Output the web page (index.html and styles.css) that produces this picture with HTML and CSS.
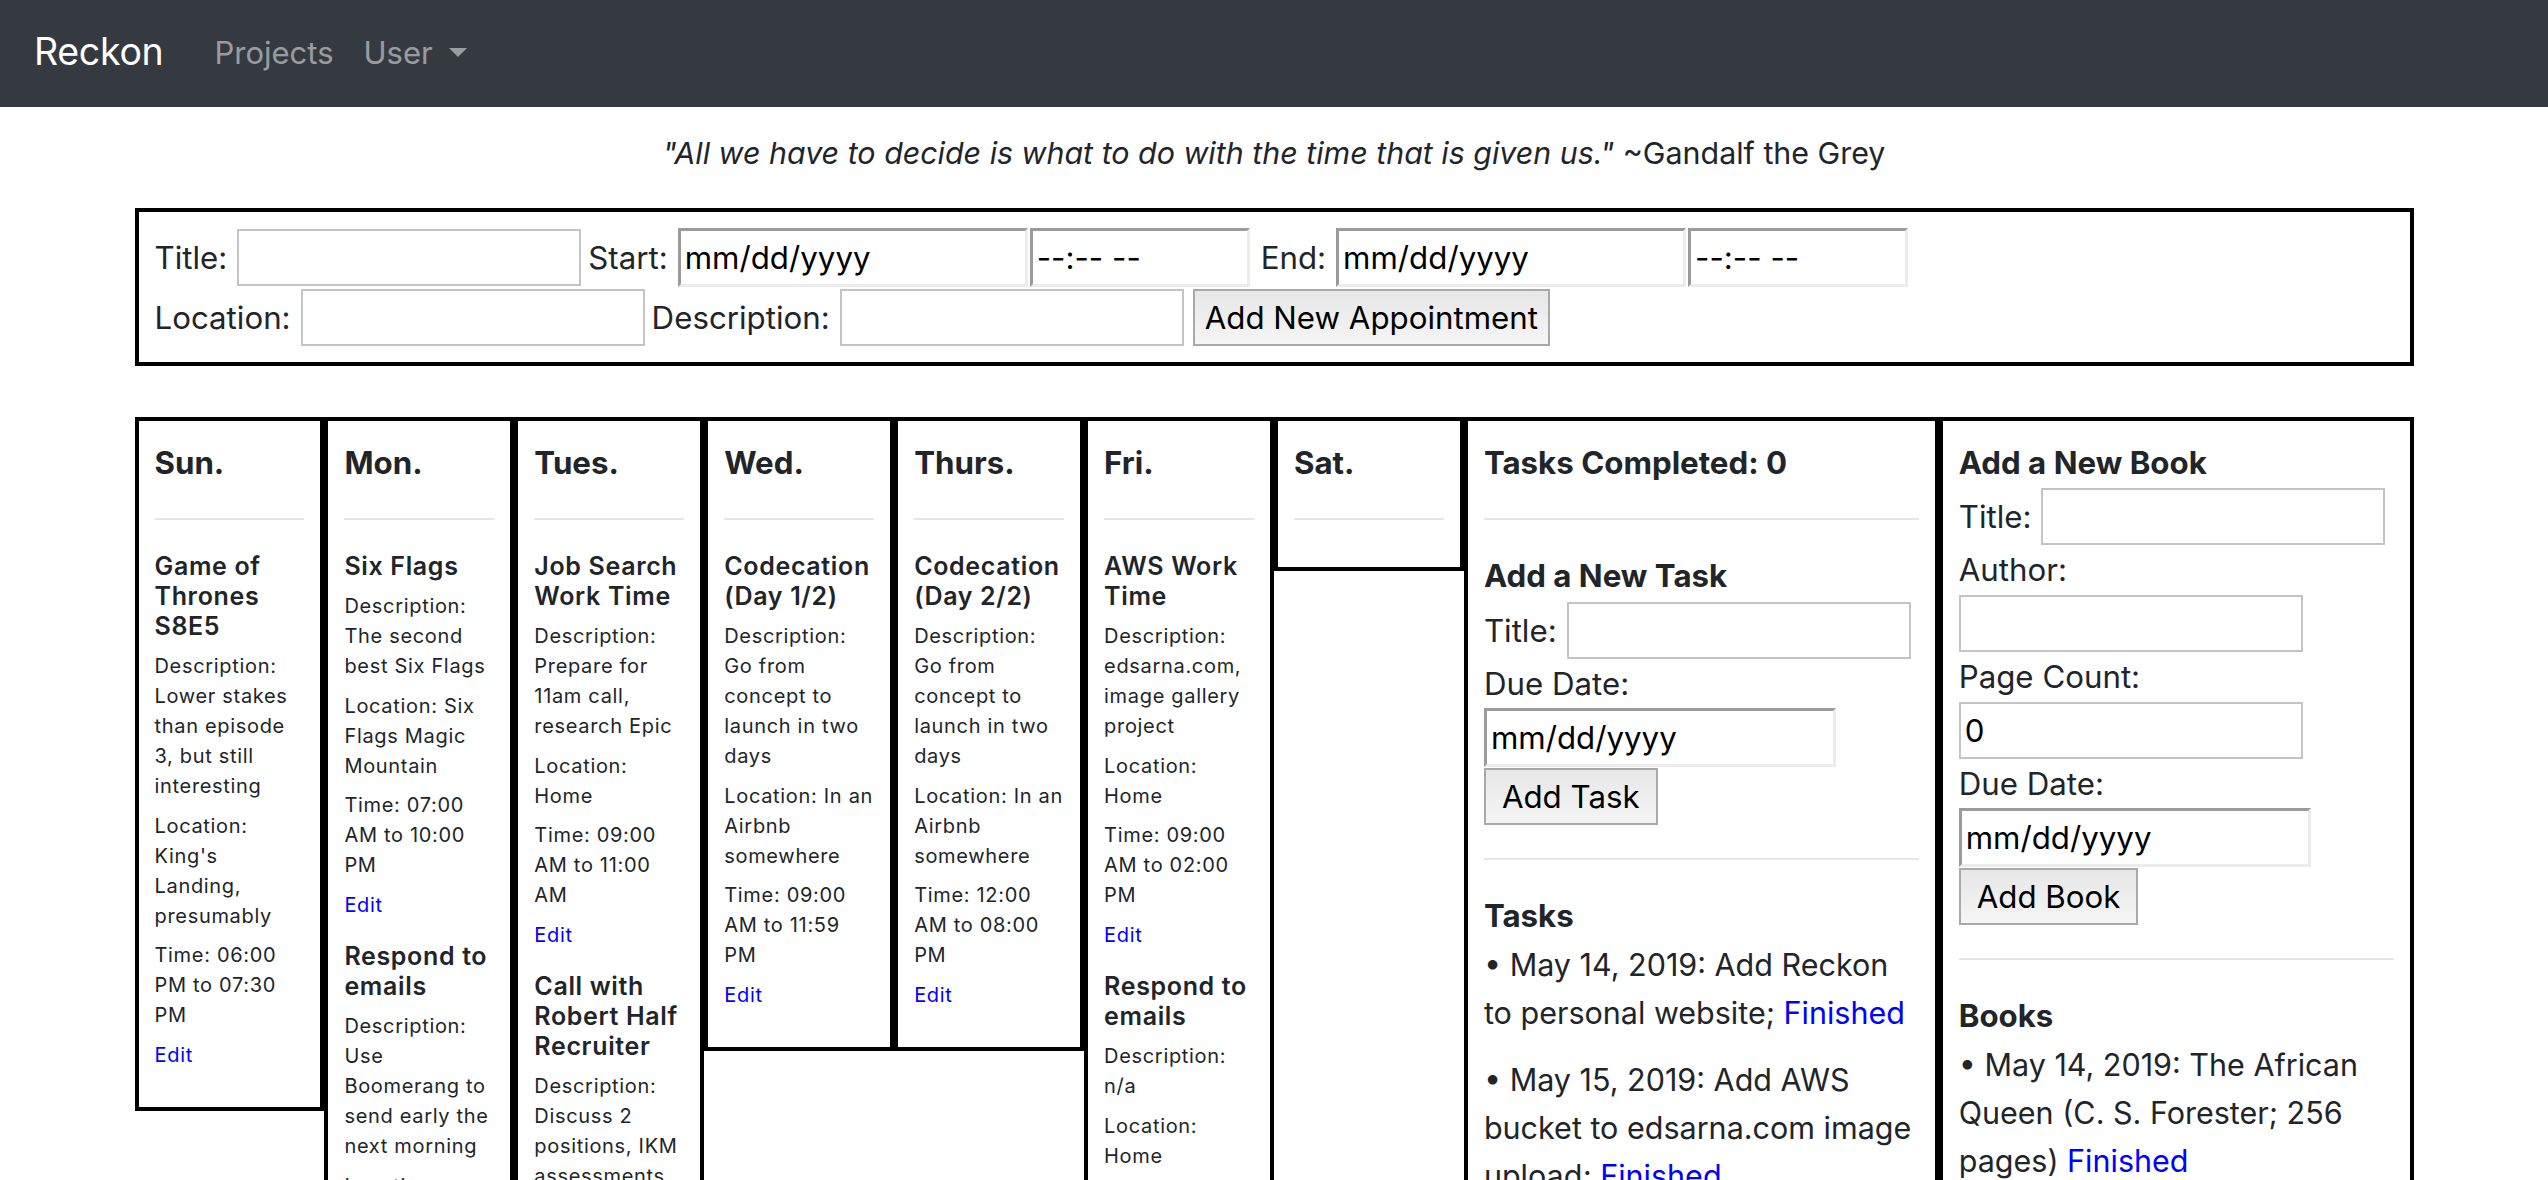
FILE: index.html
```html
<!DOCTYPE html>
<html lang="en">
<head>
<meta charset="utf-8">
<title>Reckon</title>
<link rel="stylesheet" href="styles.css">
</head>
<body>
<nav class="navbar">
  <a class="navbar-brand" href="#">Reckon</a>
  <a class="nav-link" href="#">Projects</a>
  <a class="nav-link dropdown-toggle" href="#">User</a>
</nav>

<p class="quote"><em>"All we have to decide is what to do with the time that is given us."</em> ~Gandalf the Grey</p>

<form class="appt-form">
  <div class="form-row">
    <label class="lbl">Title:</label>
    <input class="txt gap-after" type="text">
    <label class="lbl">Start:</label>
    <span class="dt-pair"><input class="date" type="text" placeholder="mm/dd/yyyy"><input class="date time" type="text" placeholder="--:-- --"></span>
    <label class="lbl">End:</label>
    <span class="dt-pair"><input class="date" type="text" placeholder="mm/dd/yyyy"><input class="date time" type="text" placeholder="--:-- --"></span>
  </div>
  <div class="form-row form-row-2">
    <label class="lbl">Location:</label>
    <input class="txt gap-after" type="text">
    <label class="lbl">Description:</label>
    <input class="txt gap-btn" type="text">
    <button class="btn" type="button">Add New Appointment</button>
  </div>
</form>

<main class="week">
  <section class="col">
    <h5 class="col-title">Sun.</h5>
    <hr>
    <div class="event">
      <h6 class="event-title">Game of Thrones S8E5</h6>
      <p>Description: Lower stakes than episode 3, but still interesting</p>
      <p>Location: King's Landing, presumably</p>
      <p>Time: 06:00 PM to 07:30 PM</p>
      <p><a href="#">Edit</a></p>
    </div>
  </section>

  <section class="col">
    <h5 class="col-title">Mon.</h5>
    <hr>
    <div class="event">
      <h6 class="event-title">Six Flags</h6>
      <p>Description: The second best Six Flags</p>
      <p>Location: Six Flags Magic Mountain</p>
      <p>Time: 07:00 AM to 10:00 PM</p>
      <p><a href="#">Edit</a></p>
    </div>
    <div class="event">
      <h6 class="event-title">Respond to emails</h6>
      <p>Description: Use Boomerang to send early the next morning</p>
      <p>Location: Home</p>
      <p>Time: 06:00 AM to 07:00 AM</p>
      <p><a href="#">Edit</a></p>
    </div>
  </section>

  <section class="col">
    <h5 class="col-title">Tues.</h5>
    <hr>
    <div class="event">
      <h6 class="event-title">Job Search Work Time</h6>
      <p>Description: Prepare for 11am call, research Epic</p>
      <p>Location: Home</p>
      <p>Time: 09:00 AM to 11:00 AM</p>
      <p><a href="#">Edit</a></p>
    </div>
    <div class="event">
      <h6 class="event-title">Call with Robert Half Recruiter</h6>
      <p>Description: Discuss 2 positions, IKM assessments</p>
      <p>Location: Phone</p>
      <p>Time: 11:00 AM to 11:30 AM</p>
      <p><a href="#">Edit</a></p>
    </div>
  </section>

  <section class="col">
    <h5 class="col-title">Wed.</h5>
    <hr>
    <div class="event">
      <h6 class="event-title">Codecation (Day 1/2)</h6>
      <p>Description: Go from concept to launch in two days</p>
      <p>Location: In an Airbnb somewhere</p>
      <p>Time: 09:00 AM to 11:59 PM</p>
      <p><a href="#">Edit</a></p>
    </div>
  </section>

  <section class="col">
    <h5 class="col-title">Thurs.</h5>
    <hr>
    <div class="event">
      <h6 class="event-title">Codecation (Day 2/2)</h6>
      <p>Description: Go from concept to launch in two days</p>
      <p>Location: In an Airbnb somewhere</p>
      <p>Time: 12:00 AM to 08:00 PM</p>
      <p><a href="#">Edit</a></p>
    </div>
  </section>

  <section class="col">
    <h5 class="col-title">Fri.</h5>
    <hr>
    <div class="event">
      <h6 class="event-title">AWS Work Time</h6>
      <p>Description: edsarna.com, image gallery project</p>
      <p>Location: Home</p>
      <p>Time: 09:00 AM to 02:00 PM</p>
      <p><a href="#">Edit</a></p>
    </div>
    <div class="event">
      <h6 class="event-title">Respond to emails</h6>
      <p>Description: n/a</p>
      <p>Location: Home</p>
      <p>Time: 05:00 PM to 05:30 PM</p>
      <p><a href="#">Edit</a></p>
    </div>
  </section>

  <section class="col">
    <h5 class="col-title">Sat.</h5>
    <hr>
  </section>

  <section class="col side">
    <h5 class="col-title">Tasks Completed: 0</h5>
    <hr>
    <h5 class="col-title sub">Add a New Task</h5>
    <div class="field-row">
      <label class="lbl">Title:</label>
      <input class="txt" type="text">
    </div>
    <label class="blk">Due Date:</label>
    <input class="date wide" type="text" placeholder="mm/dd/yyyy">
    <button class="btn side-btn" type="button">Add Task</button>
    <hr class="after-btn">
    <h5 class="col-title list-title">Tasks</h5>
    <p class="item">• May 14, 2019: Add Reckon to personal website; <a href="#">Finished</a></p>
    <p class="item">• May 15, 2019: Add AWS bucket to edsarna.com image upload; <a href="#">Finished</a></p>
  </section>

  <section class="col side">
    <h5 class="col-title book-head">Add a New Book</h5>
    <div class="field-row">
      <label class="lbl">Title:</label>
      <input class="txt" type="text">
    </div>
    <label class="blk">Author:</label>
    <input class="txt blk-input" type="text">
    <label class="blk">Page Count:</label>
    <input class="txt blk-input" type="text" value="0">
    <label class="blk">Due Date:</label>
    <input class="date wide" type="text" placeholder="mm/dd/yyyy">
    <button class="btn side-btn" type="button">Add Book</button>
    <hr class="after-btn">
    <h5 class="col-title list-title">Books</h5>
    <p class="item">• May 14, 2019: The African Queen (C. S. Forester; 256 pages) <a href="#">Finished</a></p>
  </section>
</main>
</body>
</html>
```

FILE: styles.css
```css
*, *::before, *::after { box-sizing: border-box; }

html { overflow: hidden; }

body {
  margin: 0;
  background: #fff;
  color: #212529;
  font-family: Inter, "Noto Sans", "Liberation Sans", sans-serif;
}

a { color: #0000ff; text-decoration: none; }

/* Navbar */
.navbar {
  display: flex;
  align-items: center;
  height: 107px;
  padding: 0 0 3px 34px;
  background: #343a40;
}
.navbar-brand {
  color: #fff;
  font-size: 37.5px;
  line-height: 1;
  letter-spacing: -0.3px;
  margin-right: 51px;
}
.nav-link {
  display: flex;
  align-items: center;
  color: rgba(255, 255, 255, 0.5);
  font-size: 31px;
  line-height: 1;
  margin-right: 30px;
}
.dropdown-toggle::after {
  content: "";
  margin-left: 16px;
  border-top: 9px solid rgba(255, 255, 255, 0.5);
  border-left: 9px solid transparent;
  border-right: 9px solid transparent;
}

/* Quote */
.quote {
  margin: 23px 0 31px;
  text-align: center;
  font-size: 30.4px;
  line-height: 47px;
}

/* Inputs */
input, button {
  margin: 0;
  font-family: inherit;
  color: #000;
  outline: none;
}
.txt {
  width: 344px;
  height: 57px;
  padding: 0 4px;
  border: 2px solid #c4c4c4;
  background: #fff;
  font-size: 31.25px;
}
.date {
  width: 350px;
  height: 59px;
  padding: 0 4px;
  border: 3px solid;
  border-color: #9b9b9b #ececec #ececec #9b9b9b;
  background: #fff;
  font-size: 31.25px;
}
.date.time { width: 220px; }
.date::placeholder { color: #000; opacity: 1; }
.btn {
  height: 57px;
  padding: 0 10px;
  border: 2px solid #a9a9a9;
  background: linear-gradient(#e7e7e7, #f5f5f5);
  font-size: 31.25px;
}

/* Appointment form */
.appt-form {
  width: 2279px;
  margin: 0 auto;
  padding: 16px;
  border: 4px solid #000;
}
.form-row {
  display: flex;
  align-items: center;
}
.form-row-2 { margin-top: 2px; }
.lbl {
  font-size: 31.25px;
  margin-right: 10px;
}
.gap-after { margin-right: 7px; }
.gap-btn { margin-right: 9px; }
.dt-pair {
  display: flex;
  gap: 2px;
  margin-right: 11px;
}

/* Week grid */
.week {
  width: 2279px;
  margin: 51px auto 0;
  display: grid;
  grid-template-columns: repeat(7, 1fr) 2.5fr 2.5fr;
  align-items: start;
}
.col {
  display: flex;
  flex-direction: column;
  min-width: 0;
  padding: 24px 16px 16px;
  border: 4px solid #000;
}
.col-title {
  margin: 0 0 12.5px;
  font-size: 31.25px;
  line-height: 37.5px;
  font-weight: 700;
}
.col hr {
  width: 100%;
  margin: 23px 0 31px;
  border: 0;
  border-top: 2px solid #e6e6e6;
}
.event {
  display: flex;
  flex-direction: column;
  margin-bottom: 12px;
}
.event-title {
  margin: 0 0 10px;
  font-size: 25px;
  line-height: 30px;
  font-weight: 600;
  letter-spacing: 0.65px;
}
.event p {
  margin: 0 0 9.6px;
  font-size: 20px;
  line-height: 30px;
  letter-spacing: 0.68px;
}

/* Side columns */
.side .sub { margin-top: 7px; margin-bottom: 6.5px; }
.side .book-head { margin-bottom: 5.5px; }
.field-row {
  display: flex;
  align-items: center;
}
.blk {
  display: block;
  margin-top: 2px;
  font-size: 31.25px;
  line-height: 47px;
}
.blk-input { margin-top: 1px; }
.date.wide { width: 352px; }
.side-btn {
  align-self: flex-start;
  margin-top: 1px;
  padding: 0 16px;
}
.col hr.after-btn { margin-top: 33px; }
.side .list-title { margin-top: 7px; margin-bottom: 5.5px; }
.item {
  margin: 0 0 19px;
  font-size: 30.5px;
  line-height: 48px;
}
```
